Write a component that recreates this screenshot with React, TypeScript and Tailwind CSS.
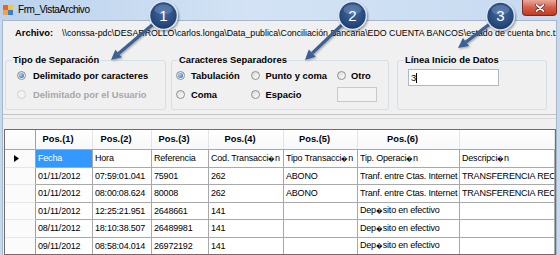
import React from 'react';

const rows: string[][] = [
  ['Fecha', 'Hora', 'Referencia', 'Cod. Transacci\uFFFDn', 'Tipo Transacci\uFFFDn', 'Tip. Operaci\uFFFDn', 'Descripci\uFFFDn'],
  ['01/11/2012', '07:59:01.041', '75901', '262', 'ABONO', 'Tranf. entre Ctas. Internet', 'TRANSFERENCIA RECIBIDA'],
  ['01/11/2012', '08:00:08.624', '80008', '262', 'ABONO', 'Tranf. entre Ctas. Internet', 'TRANSFERENCIA RECIBIDA'],
  ['01/11/2012', '12:25:21.951', '2648661', '141', '', 'Dep\uFFFDsito en efectivo', ''],
  ['08/11/2012', '18:10:38.507', '26489981', '141', '', 'Dep\uFFFDsito en efectivo', ''],
  ['09/11/2012', '08:58:04.014', '26972192', '141', '', 'Dep\uFFFDsito en efectivo', ''],
];

const headers = ['Pos.(1)', 'Pos.(2)', 'Pos.(3)', 'Pos.(4)', 'Pos.(5)', 'Pos.(6)', ''];

const PATH =
  '\\\\conssa-pdc\\DESARROLLO\\carlos.longa\\Data_publica\\Conciliación Bancaria\\EDO CUENTA BANCOS\\estado de cuenta bnc.txt';

// the broken-encoding glyph is drawn smaller so it keeps the width it has in the grid
function CellText({ text }: { text: string }) {
  const parts = text.split('\uFFFD');
  return (
    <>
      {parts.map((p, i) => (
        <React.Fragment key={i}>
          {i > 0 && <span className="text-[6.5px]">{'\uFFFD'}</span>}
          {p}
        </React.Fragment>
      ))}
    </>
  );
}

function Radio({ checked = false, disabled = false }: { checked?: boolean; disabled?: boolean }) {
  return (
    <span
      className={`relative inline-block w-[9px] h-[9px] rounded-full border shrink-0 ${
        disabled
          ? 'border-[#d0d0d0] bg-[#f3f3f3]'
          : 'border-[#8e8f8f] bg-[linear-gradient(135deg,#d9d9d9,#fdfdfd)]'
      }`}
    >
      {checked && (
        <span className="absolute left-[1px] top-[1px] w-[5px] h-[5px] rounded-full bg-[radial-gradient(circle_at_35%_35%,#a8d2fb,#2563b6)]" />
      )}
    </span>
  );
}

function Option({
  label,
  checked,
  disabled,
  gap = 'ml-[6px]',
}: {
  label: string;
  checked?: boolean;
  disabled?: boolean;
  gap?: string;
}) {
  return (
    <div className="flex items-center h-[19px]">
      <Radio checked={checked} disabled={disabled} />
      <span className={`${gap} font-bold text-[9.4px] leading-none whitespace-nowrap ${disabled ? 'text-[#a7a7a7]' : 'text-black'}`}>
        {label}
      </span>
    </div>
  );
}

function Group({ title, className, children }: { title: string; className: string; children: React.ReactNode }) {
  return (
    <fieldset className={`border border-[#d5dfe5] rounded-[3px] shrink-0 ${className}`}>
      <legend className="ml-[6px] px-[1px] font-bold text-[9.4px] leading-[12px] text-black">{title}</legend>
      {children}
    </fieldset>
  );
}

function Arrow({ x1, y1, x2, y2 }: { x1: number; y1: number; x2: number; y2: number }) {
  const dx = x2 - x1;
  const dy = y2 - y1;
  const len = Math.hypot(dx, dy);
  const ux = dx / len;
  const uy = dy / len;
  const bx = x2 - ux * 10;
  const by = y2 - uy * 10;
  const px = -uy;
  const py = ux;
  const pts = `${x2},${y2} ${bx + px * 5},${by + py * 5} ${bx - px * 5},${by - py * 5}`;
  return (
    <g filter="url(#ash)">
      <line x1={x1} y1={y1} x2={bx} y2={by} stroke="#3a6095" strokeWidth={3.2} />
      <polygon points={pts} fill="#3a6095" />
    </g>
  );
}

function Bubble({ cx, cy, n }: { cx: number; cy: number; n: string }) {
  return (
    <g>
      <circle cx={cx} cy={cy} r={14.5} fill="#dfe8f3" filter="url(#bsh)" />
      <circle cx={cx} cy={cy} r={13.2} fill="url(#bg)" />
      <ellipse cx={cx} cy={cy - 6} rx={9} ry={5} fill="#9fb8da" opacity={0.3} />
      <text
        x={cx}
        y={cy + 5}
        textAnchor="middle"
        fill="#ffffff"
        fontSize={15}
        fontFamily="'Liberation Sans', Arial, sans-serif"
      >
        {n}
      </text>
    </g>
  );
}

function Callouts() {
  return (
    <svg className="absolute inset-0 pointer-events-none" width={560} height={255} viewBox="0 0 560 255">
      <defs>
        <radialGradient id="bg" cx="50%" cy="40%" r="65%">
          <stop offset="0%" stopColor="#46699d" />
          <stop offset="70%" stopColor="#264a7e" />
          <stop offset="100%" stopColor="#1b3862" />
        </radialGradient>
        <filter id="bsh" x="-30%" y="-30%" width="160%" height="160%">
          <feDropShadow dx="1" dy="1.5" stdDeviation="1.2" floodColor="#000" floodOpacity="0.4" />
        </filter>
        <filter id="ash" x="-30%" y="-30%" width="160%" height="160%">
          <feDropShadow dx="1" dy="1" stdDeviation="0.8" floodColor="#000" floodOpacity="0.35" />
        </filter>
      </defs>
      <Arrow x1={158} y1={20} x2={111} y2={60} />
      <Arrow x1={347} y1={20} x2={305} y2={60} />
      <Arrow x1={495} y1={20} x2={458} y2={48} />
      <Bubble cx={163.5} cy={15.5} n="1" />
      <Bubble cx={352.5} cy={15.5} n="2" />
      <Bubble cx={500.5} cy={16} n="3" />
    </svg>
  );
}

const cols = 'grid grid-cols-[31px_57px_59px_57px_75px_74px_102px_1fr]';

function DataGrid() {
  return (
    <div className="ml-[1px] flex-1 min-h-0 border border-[#6e6e6e] bg-[#ababab] overflow-hidden">
      <div className={`${cols} h-[20px] bg-[linear-gradient(#ffffff,#f7f8fa)] border-b border-[#a9a9a9]`}>
        <div className="border-r border-[#a0a0a0]" />
        {headers.map((h, i) => (
          <div
            key={i}
            className="flex items-center justify-center pr-[12px] border-r border-[#e2e4e8] font-bold text-[9.3px] text-black whitespace-nowrap"
          >
            {h}
          </div>
        ))}
      </div>
      {rows.map((r, ri) => (
        <div key={ri} className={`${cols} h-[17.5px]`}>
          <div className="relative bg-[#fbfbfb] border-r border-[#a0a0a0] border-b border-b-[#e6e6e6]">
            {ri === 0 && (
              <svg className="absolute left-[9px] top-[5px]" width={5} height={7} viewBox="0 0 5 7">
                <polygon points="0,0 5,3.5 0,7" fill="#000" />
              </svg>
            )}
          </div>
          {r.map((c, ci) => (
            <div
              key={ci}
              className={`flex items-center pl-[2px] border-r border-b border-[#a9a9a9] text-[9px] tracking-[-0.2px] leading-[12px] whitespace-nowrap overflow-hidden ${
                ri === 0 && ci === 0 ? 'bg-[#3399ff] text-white' : 'bg-white text-black'
              }`}
            >
              <span>
                <CellText text={c} />
              </span>
            </div>
          ))}
        </div>
      ))}
    </div>
  );
}

export default function App() {
  return (
    <div className="relative w-[560px] h-[255px] overflow-hidden bg-[#c5d9ef] font-['Liberation_Sans',Arial,sans-serif] flex flex-col">
      {/* title bar */}
      <div className="h-[20px] shrink-0 flex items-start bg-[linear-gradient(90deg,#bcd2ec,#d3e3f5_45%,#c6daf0)]">
        <svg className="ml-[3px] mt-[5px]" width={10} height={10} viewBox="0 0 10 10">
          <rect x="0" y="0" width="5" height="5" fill="#e8642b" />
          <rect x="5" y="0" width="5" height="5" fill="#f6c342" />
          <rect x="0" y="5" width="5" height="5" fill="#f3a33a" />
          <rect x="5" y="5" width="5" height="5" fill="#3c7fd1" />
        </svg>
        <span className="ml-[5px] mt-[4px] text-[10px] leading-[12px] tracking-[-0.45px] text-black">Frm_VistaArchivo</span>
        <div className="ml-auto mr-[3px] w-[35px] h-[16px] rounded-b-[4px] border border-t-0 border-[#7d2b20] bg-[linear-gradient(#e9aa9c,#d5604a_50%,#c1391f)] flex items-center justify-center">
          <svg width={10} height={8} viewBox="0 0 10 8">
            <path d="M1.5 1 L8.5 7 M8.5 1 L1.5 7" stroke="#5a1a12" strokeWidth={3} strokeLinecap="round" />
            <path d="M1.5 1 L8.5 7 M8.5 1 L1.5 7" stroke="#ffffff" strokeWidth={1.8} strokeLinecap="round" />
          </svg>
        </div>
      </div>

      {/* client area */}
      <div className="ml-[2px] mr-[3px] flex-1 min-h-0 flex flex-col bg-[#f0f0f0] border border-b-0 border-[#a7b6c9]">
        <div className="h-[94px] shrink-0 border-b border-[#c4c4c4]">
          <div className="pt-[5px] pl-[12px] h-[19px] flex items-center">
            <span className="w-[47px] shrink-0 font-bold text-[9.4px] leading-[12px] text-black">Archivo:</span>
            <span className="flex-1 min-w-0 overflow-hidden whitespace-nowrap text-[8.8px] leading-[12px] text-black">{PATH}</span>
          </div>
          <div className="mt-[14px] pl-[2px] flex items-start">
            <Group title="Tipo de Separación" className="w-[161px] h-[56px]">
              <div className="pl-[11px]">
                <Option label="Delimitado por caracteres" checked gap="ml-[7px]" />
                <Option label="Delimitado por el Usuario" disabled gap="ml-[7px]" />
              </div>
            </Group>
            <Group title="Caracteres Separadores" className="ml-[5px] w-[218px] h-[56px]">
              <div className="pl-[4px] grid grid-cols-[74.5px_86.5px_1fr]">
                <Option label="Tabulación" checked />
                <Option label="Punto y coma" />
                <Option label="Otro" gap="ml-[5px]" />
                <Option label="Coma" />
                <Option label="Espacio" />
                <div className="h-[19px] flex items-center">
                  <div className="w-[40px] h-[15px] border border-[#c9c9c9] bg-[#f3f3f3]" />
                </div>
              </div>
            </Group>
            <Group title="Línea Inicio de Datos" className="ml-[8px] w-[150px] h-[56px]">
              <div className="ml-[10px] mt-[3px] w-[91px] h-[17px] border border-[#abb8c8] bg-white flex items-center pl-[2px]">
                <span className="text-[9.4px] leading-none text-black">3</span>
                <span className="w-[1px] h-[10px] bg-black" />
              </div>
            </Group>
          </div>
        </div>
        <div className="h-[4px] shrink-0 border-b border-[#dadada]" />
        <div className="h-[10px] shrink-0" />
        <DataGrid />
      </div>

      <Callouts />
    </div>
  );
}
